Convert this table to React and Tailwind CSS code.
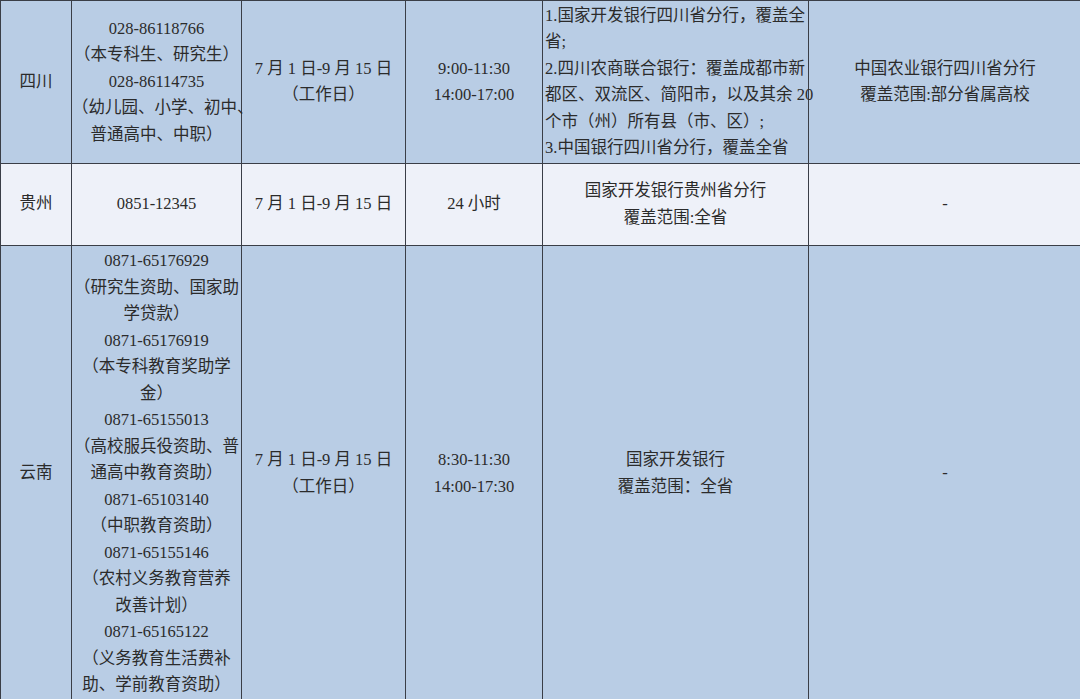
const blue = 'bg-[#b9cde5]'
const pale = 'bg-[#eef1f9]'

const rows = [
  {
    province: '四川',
    bg: blue,
    h: 'h-[163px]',
    tel: ['028-86118766', '（本专科生、研究生）', '028-86114735', '（幼儿园、小学、初中、', '普通高中、中职）'],
    date: ['7 月 1 日-9 月 15 日', '（工作日）'],
    hours: ['9:00-11:30', '14:00-17:00'],
    bank: [
      '1.国家开发银行四川省分行，覆盖全',
      '省;',
      '2.四川农商联合银行：覆盖成都市新',
      '都区、双流区、简阳市，以及其余 20',
      '个市（州）所有县（市、区）;',
      '3.中国银行四川省分行，覆盖全省',
    ],
    bankLeft: true,
    other: ['中国农业银行四川省分行', '覆盖范围:部分省属高校'],
  },
  {
    province: '贵州',
    bg: pale,
    h: 'h-[82px]',
    tel: ['0851-12345'],
    date: ['7 月 1 日-9 月 15 日'],
    hours: ['24 小时'],
    bank: ['国家开发银行贵州省分行', '覆盖范围:全省'],
    other: ['-'],
  },
  {
    province: '云南',
    bg: blue,
    h: 'h-[456px]',
    tel: [
      '0871-65176929',
      '（研究生资助、国家助',
      '学贷款）',
      '0871-65176919',
      '（本专科教育奖助学',
      '金）',
      '0871-65155013',
      '（高校服兵役资助、普',
      '通高中教育资助）',
      '0871-65103140',
      '（中职教育资助）',
      '0871-65155146',
      '（农村义务教育营养',
      '改善计划）',
      '0871-65165122',
      '（义务教育生活费补',
      '助、学前教育资助）',
    ],
    date: ['7 月 1 日-9 月 15 日', '（工作日）'],
    hours: ['8:30-11:30', '14:00-17:30'],
    bank: ['国家开发银行', '覆盖范围：全省'],
    other: ['-'],
  },
]

function Lines({ lines, left }) {
  return (
    <div className={left ? 'text-left' : 'text-center'}>
      {lines.map((l, i) => (
        <div key={i} className="whitespace-nowrap">{l}</div>
      ))}
    </div>
  )
}

export default function App() {
  const cell = 'border border-[#3a3e47] align-middle p-0'
  return (
    <div
      className="w-[1080px] h-[699px] overflow-hidden bg-[#b9cde5] text-[#2b2b2b] text-[16.5px] leading-[26.5px]"
      style={{ fontFamily: '"Liberation Serif", "Noto Sans CJK SC", serif' }}
    >
      <table className="table-fixed border-collapse w-[1081px]">
        <colgroup>
          <col className="w-[71px]" />
          <col className="w-[170px]" />
          <col className="w-[164px]" />
          <col className="w-[137px]" />
          <col className="w-[266px]" />
          <col className="w-[273px]" />
        </colgroup>
        <tbody>
          {rows.map((r, i) => (
            <tr key={i} className={`${r.bg} ${r.h}`}>
              <td className={`${cell} text-center`}>{r.province}</td>
              <td className={cell}><Lines lines={r.tel} /></td>
              <td className={cell}><Lines lines={r.date} /></td>
              <td className={cell}><Lines lines={r.hours} /></td>
              <td className={`${cell} ${r.bankLeft ? 'pl-[2px]' : ''}`}><Lines lines={r.bank} left={r.bankLeft} /></td>
              <td className={cell}><Lines lines={r.other} /></td>
            </tr>
          ))}
        </tbody>
      </table>
    </div>
  )
}
